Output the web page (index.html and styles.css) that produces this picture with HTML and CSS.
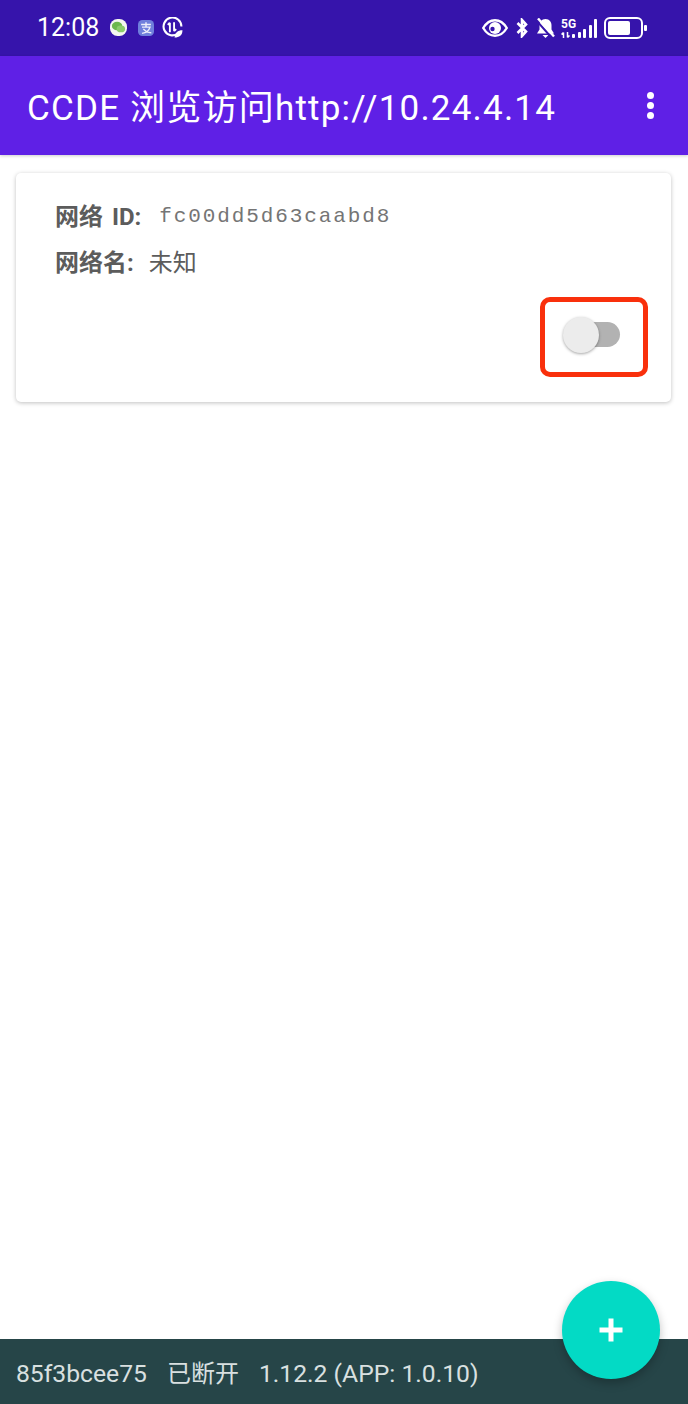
FILE: index.html
```html
<!DOCTYPE html>
<html lang="zh">
<head>
    <meta charset="UTF-8">
    <meta name="viewport" content="width=device-width, initial-scale=1.0">
    <title>CCDE</title>
    <link rel="stylesheet" href="styles.css">
</head>
<body>
    <div class="status-bar">
        <div class="status-left">
            <span class="clock">12:08</span>
            <svg class="app-icon" viewBox="0 0 18 18">
                <rect x="0" y="0" width="18" height="18" rx="8" fill="#f4f7f0"/>
                <ellipse cx="7.500" cy="7.500" rx="5.500" ry="4.500" fill="#6cb84e"/>
                <ellipse cx="11.500" cy="10.500" rx="4.500" ry="3.600" fill="#8ccc6c"/>
            </svg>
            <svg class="app-icon app-icon-alipay" viewBox="0 0 18 18">
                <rect x="0" y="0" width="18" height="18" rx="5" fill="#6f7fdc"/>
                <path d="M3.500 5h11M9 2.500v5M4.500 8h9c-1 3.500-4.500 6.500-9 7M6 10c2 2.500 5.500 4 9 4.500" fill="none" stroke="#eef0fb" stroke-width="1.600"/>
            </svg>
            <svg class="app-icon app-icon-data" viewBox="0 0 20 20">
                <path d="M15.500 15.500A8.500 8.500 0 1 1 18.500 9" fill="none" stroke="#fff" stroke-width="2"/>
                <path d="M7.500 5.500v9M7.500 5.500l-2 2M11.500 5v8.500M11.500 13.500l2-2" fill="none" stroke="#fff" stroke-width="1.800"/>
                <path d="M12 19.500c0-4.500 3-7 7.500-7 0 4.500-3 7-7.500 7z" fill="#fff"/>
            </svg>
        </div>
        <div class="status-right">
            <svg class="ic-eye" viewBox="0 0 26 18">
                <path d="M1.200 9c3-5 7-7.800 11.800-7.800S21.800 4 24.800 9c-3 5-7 7.800-11.800 7.800S4.200 14 1.200 9z" fill="none" stroke="#fff" stroke-width="2.400"/>
                <circle cx="13" cy="9" r="6" fill="#fff"/>
                <circle cx="10.500" cy="10" r="2.200" fill="#3614ab"/>
            </svg>
            <svg class="ic-bt" viewBox="0 0 12 20">
                <path d="M1.500 5l8.500 8.500-4 4.500V2l4 4.500L1.500 15" fill="none" stroke="#fff" stroke-width="2.600"/>
            </svg>
            <svg class="ic-bell" viewBox="0 0 19 20">
                <path d="M9.500 1C5.500 1 3.500 4 3.500 7.500v4L1 15.500h17l-2.500-4v-4C15.500 4 13.500 1 9.500 1z" fill="#fff"/>
                <path d="M6.500 17h6l-3 3z" fill="#fff"/>
                <path d="M0 2l15 17" stroke="#3614ab" stroke-width="2"/>
                <path d="M2 0.500l16 18" stroke="#fff" stroke-width="2.400"/>
            </svg>
            <div class="signal">
                <div class="signal-net">
                    <span class="net-label">5G</span>
                    <svg class="net-arrows" viewBox="0 0 10 6">
                        <path d="M2.500 6V0.500M2.500 0.500L0.500 2.500M6.500 0V5.500M6.500 5.500L8.500 3.500" fill="none" stroke="#fff" stroke-width="1.500"/>
                    </svg>
                </div>
                <div class="bars">
                    <span class="bar bar-1"></span>
                    <span class="bar bar-2"></span>
                    <span class="bar bar-3"></span>
                    <span class="bar bar-4"></span>
                    <span class="bar bar-5"></span>
                </div>
            </div>
            <div class="battery">
                <div class="battery-body"><div class="battery-level"></div></div>
                <div class="battery-tip"></div>
            </div>
        </div>
    </div>

    <header class="app-bar">
        <h1>CCDE 浏览访问http://10.24.4.14</h1>
        <div class="more">
            <span></span>
            <span></span>
            <span></span>
        </div>
    </header>

    <main class="content">
        <div class="card">
            <div class="info-row">
                <span class="info-label info-label-id">网络 ID:</span>
                <span class="info-id">fc00dd5d63caabd8</span>
            </div>
            <div class="info-row info-row-name">
                <span class="info-label">网络名:</span>
                <span class="info-value">未知</span>
            </div>
            <div class="card-actions">
                <div class="highlight">
                    <div class="switch">
                        <div class="switch-track"></div>
                        <div class="switch-thumb"></div>
                    </div>
                </div>
            </div>
        </div>
    </main>

    <button class="fab">
        <svg viewBox="0 0 24 24"><path d="M12 0.500v23M0.500 12h23" stroke="#fff" stroke-width="5"/></svg>
    </button>

    <footer class="footer">
        <span>85f3bcee75</span>
        <span class="footer-state">已断开</span>
        <span>1.12.2 (APP: 1.0.10)</span>
    </footer>
</body>
</html>
```

FILE: styles.css
```css
html, body {
    margin: 0;
    padding: 0;
}

body {
    width: 688px;
    height: 1404px;
    display: flex;
    flex-direction: column;
    position: relative;
    overflow: hidden;
    background: #fff;
    font-family: 'Roboto', 'Noto Sans CJK SC', sans-serif;
}

.status-bar {
    height: 56px;
    flex: none;
    box-sizing: border-box;
    padding: 0 41px 1px 37px;
    display: flex;
    align-items: center;
    justify-content: space-between;
    background: #3614ab;
    color: #fff;
}

.status-left,
.status-right {
    display: flex;
    align-items: center;
}

.clock {
    font-size: 25px;
    margin-right: 11px;
}

.app-icon {
    width: 17px;
    height: 17px;
    margin-right: 11px;
}

.app-icon-alipay {
    width: 16px;
    height: 16px;
    margin-right: 8px;
}

.app-icon-data {
    width: 21px;
    height: 21px;
    margin-right: 0;
}

.ic-eye {
    width: 26px;
    height: 18px;
    margin-right: 8px;
}

.ic-bt {
    width: 12px;
    height: 20px;
    margin-right: 8px;
}

.ic-bell {
    width: 19px;
    height: 20px;
    margin-right: 6px;
}

.signal {
    display: flex;
    align-items: flex-end;
    gap: 1px;
    margin-right: 7px;
}

.signal-net {
    display: flex;
    flex-direction: column;
    align-items: flex-start;
    width: 10px;
}

.net-label {
    font-size: 12px;
    font-weight: 700;
    line-height: 12px;
    white-space: nowrap;
}

.net-arrows {
    width: 10px;
    height: 6px;
    margin-top: 2px;
}

.bars {
    display: flex;
    align-items: flex-end;
    gap: 2.500px;
}

.bar {
    width: 3px;
    background: #fff;
    border-radius: 1px;
}

.bar-1 { height: 4px; }
.bar-2 { height: 6px; }
.bar-3 { height: 9px; }
.bar-4 { height: 13px; }
.bar-5 { height: 19px; }

.battery {
    display: flex;
    align-items: center;
    gap: 1px;
}

.battery-body {
    width: 39px;
    height: 22px;
    box-sizing: border-box;
    border: 2px solid #fff;
    border-radius: 6px;
    padding: 2px;
}

.battery-level {
    width: 22px;
    height: 100%;
    background: #fff;
    border-radius: 2px;
}

.battery-tip {
    width: 3px;
    height: 6px;
    background: #fff;
    border-radius: 1px;
}

.app-bar {
    height: 99px;
    flex: none;
    box-sizing: border-box;
    padding: 0 34px 0 27px;
    display: flex;
    align-items: center;
    justify-content: space-between;
    background: #5f20e6;
    box-shadow: 0 1px 3px rgba(0, 0, 0, 0.2);
    color: #fff;
}

.app-bar h1 {
    margin: 0 0 3px;
    font-size: 35px;
    font-weight: 400;
    letter-spacing: 1.200px;
    white-space: nowrap;
}

.more {
    display: flex;
    flex-direction: column;
    gap: 3px;
}

.more span {
    width: 7px;
    height: 7px;
    border-radius: 50%;
    background: #fff;
}

.content {
    flex: 1;
    padding: 18px 17px 0 16px;
}

.card {
    height: 229px;
    box-sizing: border-box;
    padding: 25px 23px 0 39px;
    display: flex;
    flex-direction: column;
    background: #fff;
    border-radius: 5px;
    box-shadow: 0 1px 4px rgba(0, 0, 0, 0.25);
}

.info-row {
    display: flex;
    align-items: center;
    height: 32px;
    color: #5c5c5c;
}

.info-row-name {
    margin-top: 14px;
}

.info-label {
    font-size: 24px;
    font-weight: 700;
    white-space: nowrap;
}

.info-label-id {
    word-spacing: 3px;
}

.info-id {
    margin: 4px 0 0 18px;
    font-family: 'Liberation Mono', monospace;
    font-size: 21px;
    letter-spacing: 1.900px;
    color: #757575;
}

.info-value {
    margin-left: 15px;
    font-size: 24px;
}

.card-actions {
    display: flex;
    justify-content: flex-end;
    margin-top: 21px;
}

.highlight {
    width: 108px;
    height: 80px;
    box-sizing: border-box;
    border: 5px solid #f9300c;
    border-radius: 10px;
    display: flex;
    align-items: center;
    justify-content: center;
}

.switch {
    position: relative;
    width: 57px;
    height: 36px;
    margin: 0 5px 4px 0;
}

.switch-track {
    position: absolute;
    right: 0;
    top: 5px;
    width: 50px;
    height: 25px;
    border-radius: 13px;
    background: #b2b2b2;
}

.switch-thumb {
    position: absolute;
    left: 0;
    top: 0;
    width: 36px;
    height: 36px;
    border-radius: 50%;
    background: #ececec;
    box-shadow: 0 1px 3px rgba(0, 0, 0, 0.35);
}

.fab {
    position: absolute;
    left: 562px;
    top: 1281px;
    width: 98px;
    height: 98px;
    padding: 0;
    border: none;
    border-radius: 50%;
    background: #03dac5;
    box-shadow: 0 4px 10px rgba(0, 0, 0, 0.25);
    display: flex;
    align-items: center;
    justify-content: center;
}

.fab svg {
    width: 24px;
    height: 24px;
}

.footer {
    height: 65px;
    flex: none;
    box-sizing: border-box;
    padding: 20px 16px 0;
    display: flex;
    align-items: baseline;
    gap: 20px;
    background: #264548;
    color: #d9e0e0;
    font-size: 24.700px;
    line-height: 30px;
    white-space: nowrap;
}

.footer-state {
    font-size: 24px;
}
```
